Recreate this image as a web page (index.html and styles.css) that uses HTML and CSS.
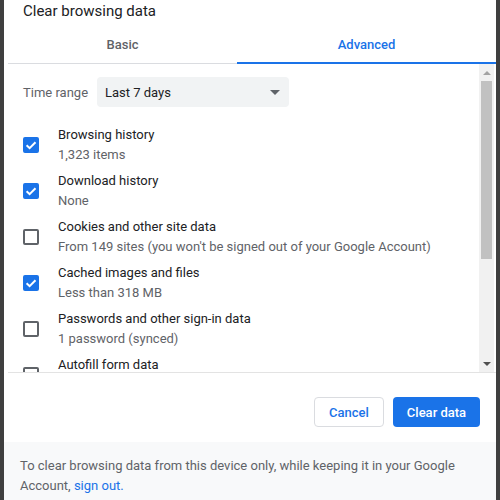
FILE: index.html
```html
<!DOCTYPE html>
<html>
<head>
<meta charset="utf-8">
<link rel="stylesheet" href="styles.css">
</head>
<body>
<div class="dialog">
  <div class="title">Clear browsing data</div>
  <div class="tabs">
    <div class="tab tab-basic">Basic</div>
    <div class="tab tab-adv active">Advanced</div>
  </div>
  <div class="scroll-area">
    <div class="content">
      <div class="time-row">
        <span class="time-label">Time range</span>
        <div class="select">
          <span>Last 7 days</span>
          <span class="caret"></span>
        </div>
      </div>
      <div class="item">
        <span class="cb checked"><svg viewBox="0 0 16 16" width="16" height="16"><path d="M3.6 8.2 L6.6 11.1 L12.5 5.2" fill="none" stroke="#fff" stroke-width="2"/></svg></span>
        <div class="texts"><div class="t1">Browsing history</div><div class="t2">1,323 items</div></div>
      </div>
      <div class="item">
        <span class="cb checked"><svg viewBox="0 0 16 16" width="16" height="16"><path d="M3.6 8.2 L6.6 11.1 L12.5 5.2" fill="none" stroke="#fff" stroke-width="2"/></svg></span>
        <div class="texts"><div class="t1">Download history</div><div class="t2">None</div></div>
      </div>
      <div class="item">
        <span class="cb"></span>
        <div class="texts"><div class="t1">Cookies and other site data</div><div class="t2">From 149 sites (you won't be signed out of your Google Account)</div></div>
      </div>
      <div class="item">
        <span class="cb checked"><svg viewBox="0 0 16 16" width="16" height="16"><path d="M3.6 8.2 L6.6 11.1 L12.5 5.2" fill="none" stroke="#fff" stroke-width="2"/></svg></span>
        <div class="texts"><div class="t1">Cached images and files</div><div class="t2">Less than 318 MB</div></div>
      </div>
      <div class="item">
        <span class="cb"></span>
        <div class="texts"><div class="t1">Passwords and other sign-in data</div><div class="t2">1 password (synced)</div></div>
      </div>
      <div class="item">
        <span class="cb"></span>
        <div class="texts"><div class="t1">Autofill form data</div><div class="t2">&nbsp;</div></div>
      </div>
      <div class="item">
        <span class="cb"></span>
        <div class="texts"><div class="t1">Site settings</div><div class="t2">&nbsp;</div></div>
      </div>
      <div class="item">
        <span class="cb"></span>
        <div class="texts"><div class="t1">Hosted app data</div><div class="t2">&nbsp;</div></div>
      </div>
    </div>
    <div class="scrollbar">
      <div class="sb-btn"><span class="arrow-up"></span></div>
      <div class="sb-track"><div class="sb-thumb"></div></div>
      <div class="sb-btn"><span class="arrow-down"></span></div>
    </div>
  </div>
  <div class="actions">
    <button class="btn btn-cancel">Cancel</button>
    <button class="btn btn-primary">Clear data</button>
  </div>
  <div class="footer">
    To clear browsing data from this device only, while keeping it in your Google Account, <a class="link">sign out.</a>
  </div>
</div>
</body>
</html>
```
FILE: styles.css
```css
html, body {
  margin: 0;
  padding: 0;
  height: 500px;
  overflow: hidden;
}
body {
  background: #3f3f3f;
  font-family: Roboto, "Liberation Sans", sans-serif;
}
.dialog {
  margin-left: 4px;
  width: 492px;
  height: 500px;
  background: #fff;
  display: flex;
  flex-direction: column;
}
.title {
  height: 26px;
  line-height: 22px;
  font-size: 15px;
  color: #202124;
  padding-left: 19px;
}
.tabs {
  display: flex;
  height: 37px;
  margin-left: 4px;
  border-bottom: 1px solid #dadce0;
}
.tab {
  display: flex;
  align-items: center;
  justify-content: center;
  font-size: 13px;
  font-weight: 500;
  color: #5f6368;
  position: relative;
}
.tab-basic { width: 229px; }
.tab-adv { flex: 1; }
.tab.active { color: #1a73e8; }
.tab.active::after {
  content: "";
  position: absolute;
  left: 0;
  right: 0;
  bottom: -1px;
  height: 2px;
  background: #1a73e8;
}
.scroll-area {
  display: flex;
  height: 308px;
  margin-left: 4px;
  border-bottom: 1px solid #e3e3e3;
}
.content {
  flex: 1;
  overflow: hidden;
  padding-top: 13px;
}
.time-row {
  display: flex;
  align-items: center;
  padding-left: 15px;
  height: 30px;
}
.time-label {
  font-size: 13px;
  color: #5f6368;
  width: 74px;
}
.select {
  width: 192px;
  height: 30px;
  background: #f1f3f4;
  border-radius: 4px;
  display: flex;
  align-items: center;
  justify-content: space-between;
  padding: 0 9px 0 8px;
  box-sizing: border-box;
  font-size: 13px;
  color: #202124;
}
.caret {
  width: 0;
  height: 0;
  border-left: 5px solid transparent;
  border-right: 5px solid transparent;
  border-top: 5px solid #5f6368;
}
.time-row + .item { margin-top: 18px; }
.item {
  display: flex;
  align-items: center;
  height: 40px;
  margin-bottom: 6px;
  padding-left: 15px;
}
.cb {
  width: 16px;
  height: 16px;
  box-sizing: border-box;
  border: 2px solid #5f6368;
  border-radius: 2px;
  flex: none;
  display: flex;
  align-items: center;
  justify-content: center;
}
.cb svg { display: block; flex: none; }
.cb.checked {
  background: #1a73e8;
  border-color: #1a73e8;
}
.texts {
  margin-left: 19px;
  font-size: 13px;
  line-height: 20px;
}
.t1 { color: #202124; }
.t2 { color: #5f6368; }
.scrollbar {
  width: 15px;
  margin-right: 2px;
  background: #f1f1f1;
  display: flex;
  flex-direction: column;
}
.sb-btn {
  height: 17px;
  display: flex;
  align-items: center;
  justify-content: center;
}
.arrow-up {
  width: 0; height: 0;
  border-left: 4px solid transparent;
  border-right: 4px solid transparent;
  border-bottom: 4px solid #a3a3a3;
}
.arrow-down {
  width: 0; height: 0;
  border-left: 4px solid transparent;
  border-right: 4px solid transparent;
  border-top: 4px solid #505050;
}
.sb-track {
  flex: 1;
  padding: 0 2px;
}
.sb-thumb {
  height: 178px;
  background: #c1c1c1;
}
.actions {
  height: 69px;
  display: flex;
  justify-content: flex-end;
  align-items: flex-start;
  padding: 24px 16px 0 0;
  box-sizing: border-box;
  gap: 9px;
}
.btn {
  height: 30px;
  border-radius: 4px;
  font-family: Roboto, "Liberation Sans", sans-serif;
  font-size: 13px;
  font-weight: 500;
  padding: 0;
  cursor: pointer;
}
.btn-cancel {
  width: 70px;
  background: #fff;
  color: #1a73e8;
  border: 1px solid #dadce0;
}
.btn-primary {
  width: 87px;
  background: #1a73e8;
  color: #fff;
  border: none;
}
.footer {
  flex: 1;
  background: #f8f9fa;
  padding: 14px 20px 0 16px;
  font-size: 13px;
  line-height: 20px;
  color: #5f6368;
}
.link {
  color: #1a73e8;
  text-decoration: none;
}
```
